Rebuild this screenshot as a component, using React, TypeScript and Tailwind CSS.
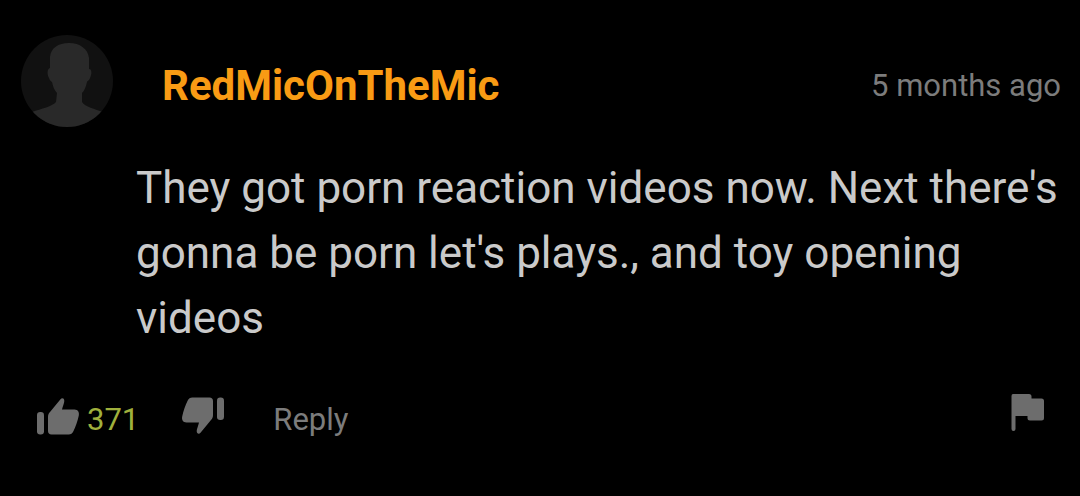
import { useState } from 'react';

type Comment = {
  author: string;
  age: string;
  text: string;
  votes: number;
};

const comment: Comment = {
  author: 'RedMicOnTheMic',
  age: '5 months ago',
  text: "They got porn reaction videos now. Next there's gonna be porn let's plays., and toy opening videos",
  votes: 371,
};

function Avatar() {
  return (
    <svg viewBox="0 0 92 92" className="size-[92px] shrink-0 rounded-full" aria-hidden="true">
      <rect width="92" height="92" fill="#111111" />
      <path
        fill="#292929"
        d="M48 8C59 8 67 14 68 23L68 34C71 34 71 39 69 43C68 46 66 46 66 47C65 52 63 56 61 58L61 67C64 72 74 74 82 77L92 92H0L11 77C20 74 32 71 35 67L36 58C33 55 32 51 31 47C30 46 29 46 28 43C26 39 26 34 29 33L29 22C30 13 37 8 48 8Z"
      />
    </svg>
  );
}

function Thumb({ className = '' }: { className?: string }) {
  return (
    <svg viewBox="0 0 44 38" className={`h-[38px] w-11 ${className}`} fill="currentColor" aria-hidden="true">
      <rect x="1" y="15" width="7" height="22.5" rx="3.2" />
      <path d="M12 20C12 17.8 12.6 16.4 14 15L24.5 2.3C25.6 .9 28.3 .8 28.3 4C28.3 6 26.6 9.5 26 12.5H38.5C42 12.5 43.5 15.3 42.8 18.5C41.8 23.5 39.5 30 37.4 34.2C36.2 36.6 35 37.5 32.6 37.5H15.5C13.3 37.5 12 36.2 12 34Z" />
    </svg>
  );
}

function Flag() {
  return (
    <svg viewBox="0 0 34 38" className="h-[38px] w-[34px]" fill="currentColor" aria-hidden="true">
      <path d="M2 0H18Q20.5 0 20.5 2.5V4.5H30.5Q33 4.5 33 7V24Q33 26.5 30.5 26.5H19Q16.5 26.5 16.5 24V22H4.5V35Q4.5 37 2.5 37T.5 35V2Q.5 0 2 0Z" />
    </svg>
  );
}

export default function App() {
  const [votes, setVotes] = useState(comment.votes);

  return (
    <main className="min-h-screen bg-black pt-[35px] pr-[19px] pb-12 pl-[21px] font-[Roboto,sans-serif]">
      <article>
        <header className="flex">
          <Avatar />
          <div className="flex flex-1 items-center justify-between pt-2.5 pl-[49px]">
            <a href="#author" className="text-[42px] leading-[48px] font-bold text-[#f99b14]">
              {comment.author}
            </a>
            <time className="text-[31px] leading-9 text-[#7c7c7c]">{comment.age}</time>
          </div>
        </header>

        <p className="mt-[29px] pl-[115px] text-[44px] leading-[65px] text-[#cacaca]">{comment.text}</p>

        <footer className="mt-[43px] flex items-start pl-[15px] text-[31px] leading-9 text-[#6d6d6d]">
          <button type="button" aria-label="Like" className="mt-[3px]" onClick={() => setVotes(votes + 1)}>
            <Thumb />
          </button>
          <span className="mt-2 ml-[7px] text-[#a0b03c]">{votes}</span>
          <button
            type="button"
            aria-label="Dislike"
            className="mt-[3px] ml-[42px]"
            onClick={() => setVotes(votes - 1)}
          >
            <Thumb className="rotate-180" />
          </button>
          <button type="button" className="mt-2 ml-12 text-[#7c7c7c]">
            Reply
          </button>
          <button type="button" aria-label="Report" className="mr-4 ml-auto">
            <Flag />
          </button>
        </footer>
      </article>
    </main>
  );
}
